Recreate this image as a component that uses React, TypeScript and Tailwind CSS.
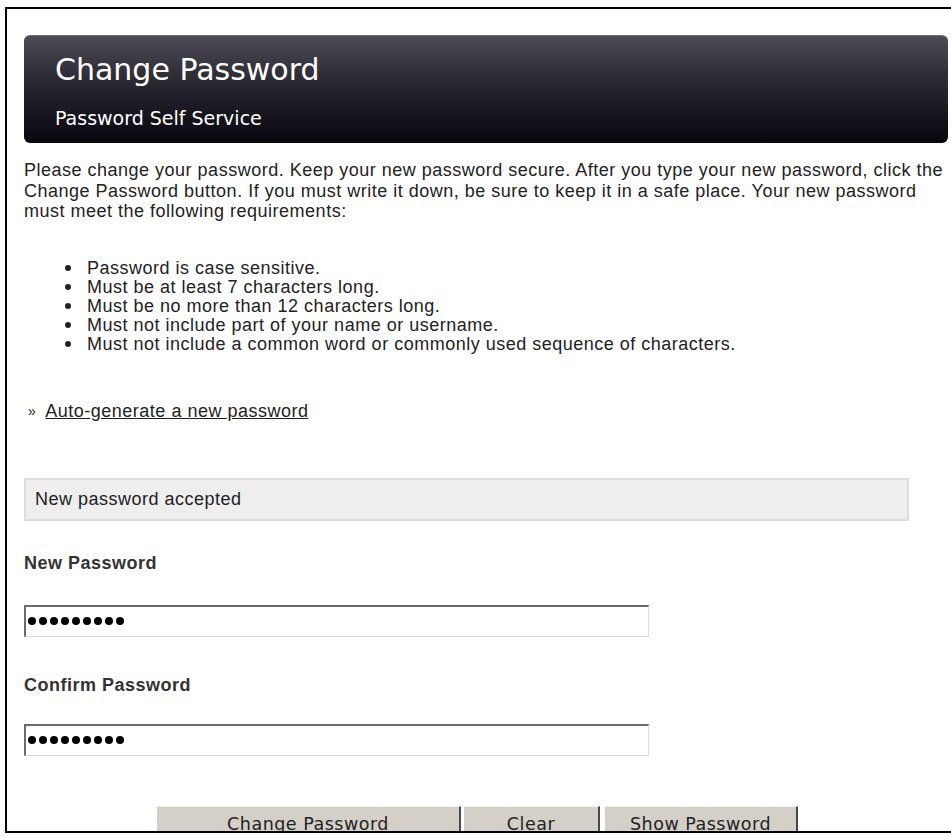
import type { ReactNode } from "react";

const rules = [
  "Password is case sensitive.",
  "Must be at least 7 characters long.",
  "Must be no more than 12 characters long.",
  "Must not include part of your name or username.",
  "Must not include a common word or commonly used sequence of characters.",
];

function MaskedField() {
  // classic inset text box with nine mask dots
  return (
    <div className="flex h-[32px] w-[625px] items-center gap-[3px] border-t-2 border-r border-b border-l-2 border-t-[#6b6b6b] border-r-[#dcdad4] border-b-[#dcdad4] border-l-[#6b6b6b] bg-white pl-[2px]">
      {Array.from({ length: 9 }).map((_, i) => (
        <span key={i} className="h-[8px] w-[8px] rounded-full bg-black" />
      ))}
    </div>
  );
}

function FormButton({ children, width }: { children: ReactNode; width: string }) {
  return (
    <button
      type="button"
      className={`${width} h-[40px] shrink-0 border-t border-l-2 border-r-2 border-t-[#f4f2ee] border-l-white border-r-[#4a4a4a] bg-[#d4d0c8] pb-[4px] text-[17.5px] leading-[22px] text-[#222] [font-family:'DejaVu_Sans',sans-serif]`}
    >
      {children}
    </button>
  );
}

export default function App() {
  return (
    <div className="h-[837px] w-[951px] overflow-hidden bg-white">
      <div className="ml-[5px] mt-[7px] h-[826px] w-[980px] overflow-hidden border-2 border-black pl-[17px] pt-[26px] text-[18px] tracking-[0.5px] text-[#222] [font-family:'Liberation_Sans',Arial,sans-serif]">
        {/* page banner */}
        <div className="h-[108px] w-[924px] rounded-[6px] border-t border-[#6d6b74] bg-gradient-to-b from-[#4d4b56] via-[#25232c] to-[#08070f] pl-[31px] pt-[16px] tracking-normal text-white [font-family:'DejaVu_Sans',sans-serif]">
          <h1 className="text-[30px] leading-[36px]">Change Password</h1>
          <p className="mt-[18px] text-[19px] leading-[24px]">Password Self Service</p>
        </div>

        <p className="mt-[17px] w-[924px] leading-[20.5px]">
          Please change your password. Keep your new password secure. After you type your new password, click the
          Change Password button. If you must write it down, be sure to keep it in a safe place. Your new password
          must meet the following requirements:
        </p>

        <ul className="mt-[37px]">
          {rules.map((r) => (
            <li key={r} className="flex items-center leading-[19px]">
              <span className="ml-[41px] mr-[16px] h-[6px] w-[6px] rounded-full bg-[#222]" />
              {r}
            </li>
          ))}
        </ul>

        <p className="mt-[47px] flex items-center leading-[20px]">
          <span className="ml-[4px] mr-[9px] text-[14px]">»</span>
          <a href="#" className="underline">
            Auto-generate a new password
          </a>
        </p>

        <div className="mt-[57px] flex h-[43px] w-[885px] items-center border-2 border-[#dddddd] bg-[#eeeeee] pl-[9px]">
          New password accepted
        </div>

        <label className="mt-[32px] block font-bold leading-[20px] text-[#333]">New Password</label>
        <div className="mt-[32px]">
          <MaskedField />
        </div>

        <label className="mt-[38px] block font-bold leading-[20px] text-[#333]">Confirm Password</label>
        <div className="mt-[29px]">
          <MaskedField />
        </div>

        <div className="ml-[131px] mt-[50px] flex items-start">
          <FormButton width="w-[306px]">Change Password</FormButton>
          <div className="w-[1px] shrink-0" />
          <FormButton width="w-[138px]">Clear</FormButton>
          <div className="w-[3px] shrink-0" />
          <FormButton width="w-[195px]">Show Password</FormButton>
        </div>
      </div>
    </div>
  );
}
